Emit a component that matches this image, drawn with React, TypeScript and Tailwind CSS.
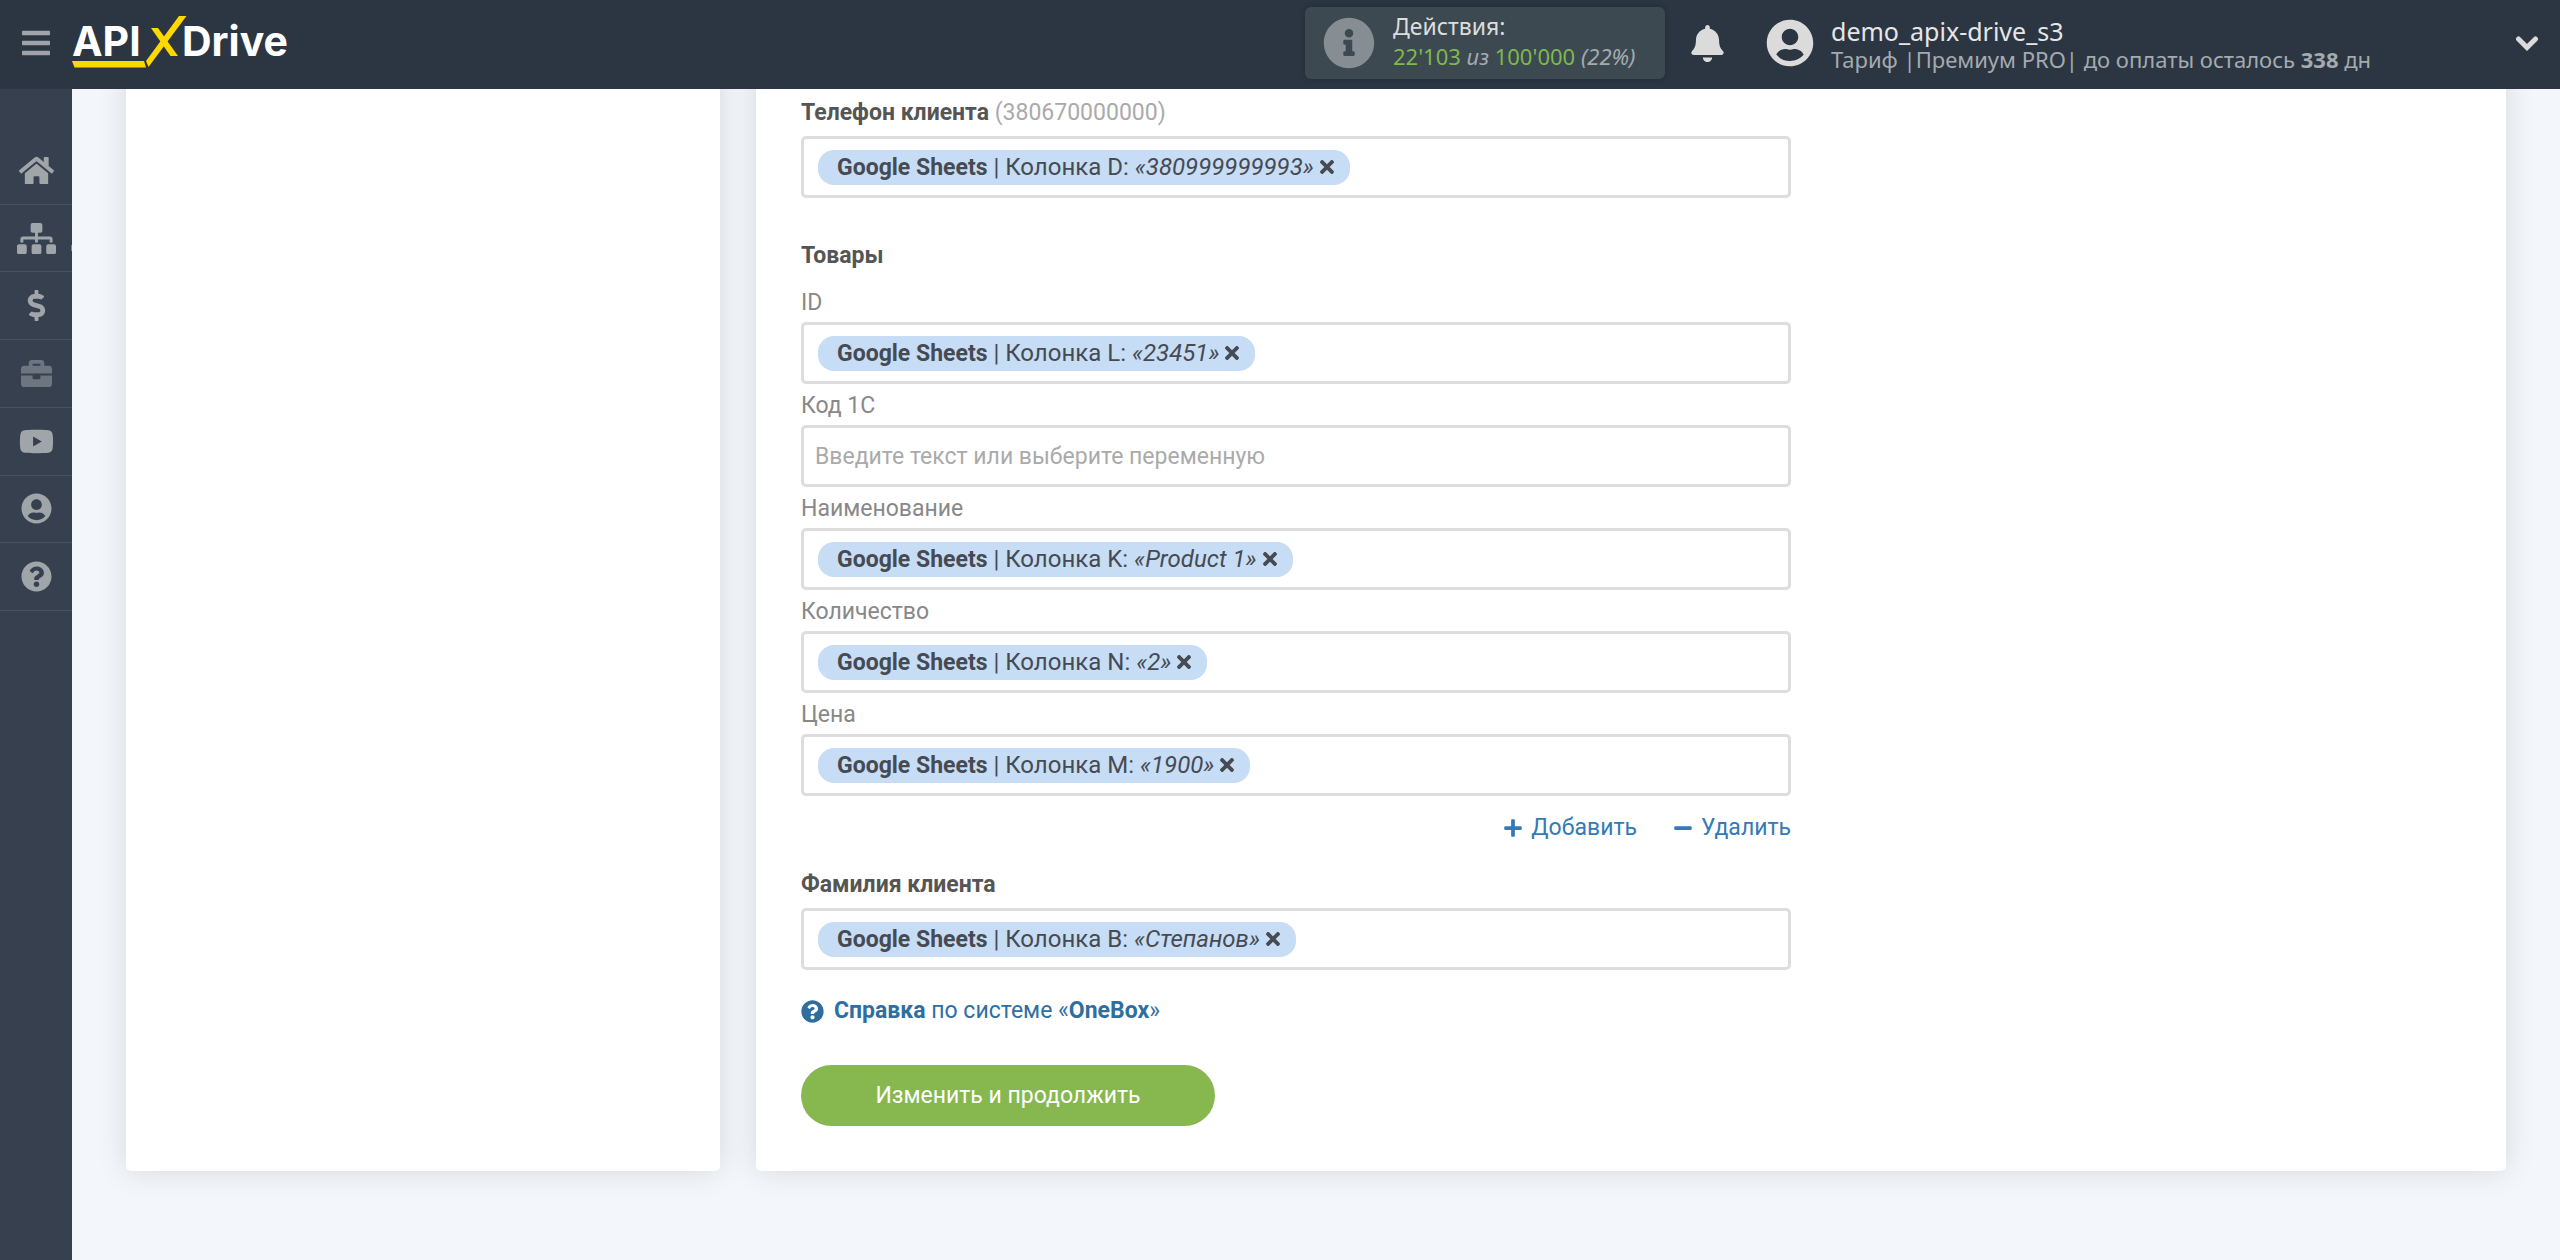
import type { ReactNode } from "react";
import { clsx } from "clsx";
import {
  FaBars,
  FaBell,
  FaBriefcase,
  FaDollarSign,
  FaHome,
  FaInfoCircle,
  FaMinus,
  FaPlus,
  FaQuestionCircle,
  FaSitemap,
  FaTimes,
  FaUserCircle,
  FaYoutube,
} from "react-icons/fa";

const NAV_ITEMS = [
  { label: "Главная", icon: <FaHome className="size-[35px]" /> },
  { label: "Связи", icon: <FaSitemap className="size-[39px]" />, marker: true },
  { label: "Оплата", icon: <FaDollarSign className="size-[31px]" /> },
  { label: "Проекты", icon: <FaBriefcase className="size-[31px]" />, muted: true },
  { label: "Видео", icon: <FaYoutube className="size-[35px]" /> },
  { label: "Профиль", icon: <FaUserCircle className="size-[31px]" /> },
  { label: "Помощь", icon: <FaQuestionCircle className="size-[31px]" /> },
];

type Variable = { column: string; value: string };

const PRODUCT_FIELDS: { id: string; label: string; variable?: Variable }[] = [
  { id: "product-id", label: "ID", variable: { column: "L", value: "23451" } },
  { id: "product-code", label: "Код 1С" },
  { id: "product-name", label: "Наименование", variable: { column: "K", value: "Product 1" } },
  { id: "product-count", label: "Количество", variable: { column: "N", value: "2" } },
  { id: "product-price", label: "Цена", variable: { column: "M", value: "1900" } },
];

export default function App() {
  return (
    <div className="flex min-h-screen flex-col bg-[#f3f7fc] font-['Roboto',sans-serif] text-[23px] leading-[30px] text-[#555]">
      <Header />
      <div className="flex flex-1">
        <Sidebar />
        <main className="flex flex-1 items-stretch gap-9 overflow-hidden px-[54px] pb-[89px]">
          <section className="-mt-10 w-[594px] shrink-0 rounded-[5px] bg-white shadow-[0_0_30px_rgba(0,0,0,0.12)]" />
          <section className="-mt-10 flex-1 rounded-[5px] bg-white px-[45px] pt-[49px] pb-11 shadow-[0_0_30px_rgba(0,0,0,0.12)]">
            <SettingsForm />
          </section>
        </main>
      </div>
    </div>
  );
}

function Header() {
  return (
    <header className="z-10 flex h-[89px] shrink-0 items-center bg-[#2b3642] pr-[21px] pb-[3px] pl-[22px] font-['Noto_Sans',sans-serif] text-[22px] text-[#a5aaaf]">
      <button type="button" aria-label="Меню" className="text-[#a0a4a8]">
        <FaBars className="h-8 w-7" />
      </button>
      <a href="#" className="ml-[22px]">
        <Logo />
      </a>

      <div className="ml-auto flex h-[72px] w-[360px] items-center rounded-md bg-[#3c4951] pl-[18px] shadow-[0_0_6px_rgba(0,0,0,0.2)]">
        <FaInfoCircle className="size-[52px] text-[#868d93]" />
        <div className="ml-[18px] pb-1">
          <p className="text-[23px] text-[#ddd]">Действия:</p>
          <p>
            <span className="text-[#7fb84e]">22'103</span> <i>из</i>{" "}
            <span className="text-[#7fb84e]">100'000</span> <i>(22%)</i>
          </p>
        </div>
      </div>

      <button type="button" aria-label="Уведомления" className="ml-6 text-[#dbdbdb]">
        <FaBell className="size-[37px]" />
      </button>

      <div className="ml-10 flex w-[749px] items-center">
        <FaUserCircle className="size-12 text-[#dbdbdb]" />
        <div className="ml-[17px] pt-1 leading-7">
          <p className="text-[25px] text-[#e6e6e6]">demo_apix-drive_s3</p>
          <p>
            Тариф |Премиум PRO| до оплаты осталось <b>338</b> дн
          </p>
        </div>
      </div>
      <button type="button" aria-label="Развернуть" className="text-[#dbdbdb]">
        <svg
          className="size-6"
          viewBox="0 0 24 24"
          fill="none"
          stroke="currentColor"
          strokeWidth="5"
          strokeLinecap="round"
        >
          <path d="M3.500 8 12 16.500 20.500 8" />
        </svg>
      </button>
    </header>
  );
}

function Logo() {
  return (
    <svg width="224" height="58" viewBox="0 0 224 58" role="img" aria-label="APIXDrive">
      <g fill="#fff" fontFamily="Inter, sans-serif" fontWeight="700" fontSize="41">
        <text x="0" y="42">
          API
        </text>
        <text x="110" y="42">
          Drive
        </text>
      </g>
      <g fill="#ffd800">
        <path d="M107 2h7.500L76.500 53l-2.500-6z" />
        <path d="M79 14h7l20 28h-7.500z" />
        <path d="M0 47h72l2 6.500H2.500z" />
      </g>
    </svg>
  );
}

function Sidebar() {
  return (
    <aside className="w-[72px] shrink-0 bg-[#36404e] pt-12">
      <nav className="grid h-[474px] grid-rows-7">
        {NAV_ITEMS.map(({ label, icon, muted, marker }) => (
          <a
            key={label}
            href="#"
            aria-label={label}
            className={clsx(
              "relative flex items-center justify-center border-b border-[#4a5460]",
              muted ? "text-[#6c7580]" : "text-[#a0a5aa]",
            )}
          >
            {icon}
            {marker && <span className="absolute right-0 bottom-5 h-1.5 w-px bg-[#7f868e]" />}
          </a>
        ))}
      </nav>
    </aside>
  );
}

function SettingsForm() {
  return (
    <form className="w-[990px] max-w-full" onSubmit={(e) => e.preventDefault()}>
      <FieldLabel htmlFor="client-phone">
        Телефон клиента <span className="font-normal text-[#aaa]">(380670000000)</span>
      </FieldLabel>
      <VariableInput id="client-phone" variable={{ column: "D", value: "380999999993" }} />

      <fieldset className="mt-[43px]">
        <legend className="mb-2.5 font-bold">Товары</legend>
        {PRODUCT_FIELDS.map(({ id, label, variable }) => (
          <div key={id}>
            <label htmlFor={id} className="block pt-[3px] leading-[38px] text-[#888]">
              {label}
            </label>
            <VariableInput id={id} variable={variable} />
          </div>
        ))}
        <div className="mt-[17px] flex justify-end gap-9 text-[#337ab7]">
          <button type="button" className="flex items-center gap-2">
            <FaPlus className="size-5" />
            Добавить
          </button>
          <button type="button" className="flex items-center gap-2">
            <FaMinus className="size-5" />
            Удалить
          </button>
        </div>
      </fieldset>

      <div className="mt-[27px]">
        <FieldLabel htmlFor="client-surname">Фамилия клиента</FieldLabel>
        <VariableInput id="client-surname" variable={{ column: "B", value: "Степанов" }} />
      </div>

      <a href="#" className="mt-[26px] flex items-center gap-2.5 text-[#2e6f9f]">
        <FaQuestionCircle className="size-[23px]" />
        <span>
          <b>Справка</b> по системе «<b>OneBox</b>»
        </span>
      </a>

      <button
        type="submit"
        className="mt-[39px] h-[61px] w-[414px] rounded-full bg-[#86b84f] text-white"
      >
        Изменить и продолжить
      </button>
    </form>
  );
}

function FieldLabel({ htmlFor, children }: { htmlFor: string; children: ReactNode }) {
  return (
    <label htmlFor={htmlFor} className="mb-2 block font-bold">
      {children}
    </label>
  );
}

function VariableInput({ id, variable }: { id: string; variable?: Variable }) {
  return (
    <div className="flex h-[62px] items-center rounded-[5px] border-3 border-[#ddd] bg-white">
      {variable && (
        <span className="ml-3.5 flex h-[35px] shrink-0 items-center gap-1.5 rounded-2xl bg-[#c7ddf5] pr-4 pl-[19px] text-2xl text-[#464a53]">
          <span>
            <b className="text-[23px]">Google Sheets</b> | Колонка {variable.column}:{" "}
            <i>«{variable.value}»</i>
          </span>
          <button type="button" aria-label="Удалить переменную">
            <FaTimes className="h-[22px] w-3.5" />
          </button>
        </span>
      )}
      <input
        id={id}
        type="text"
        placeholder={variable ? undefined : "Введите текст или выберите переменную"}
        className="h-full min-w-0 flex-1 px-[11px] outline-none placeholder:text-[#aaa]"
      />
    </div>
  );
}
